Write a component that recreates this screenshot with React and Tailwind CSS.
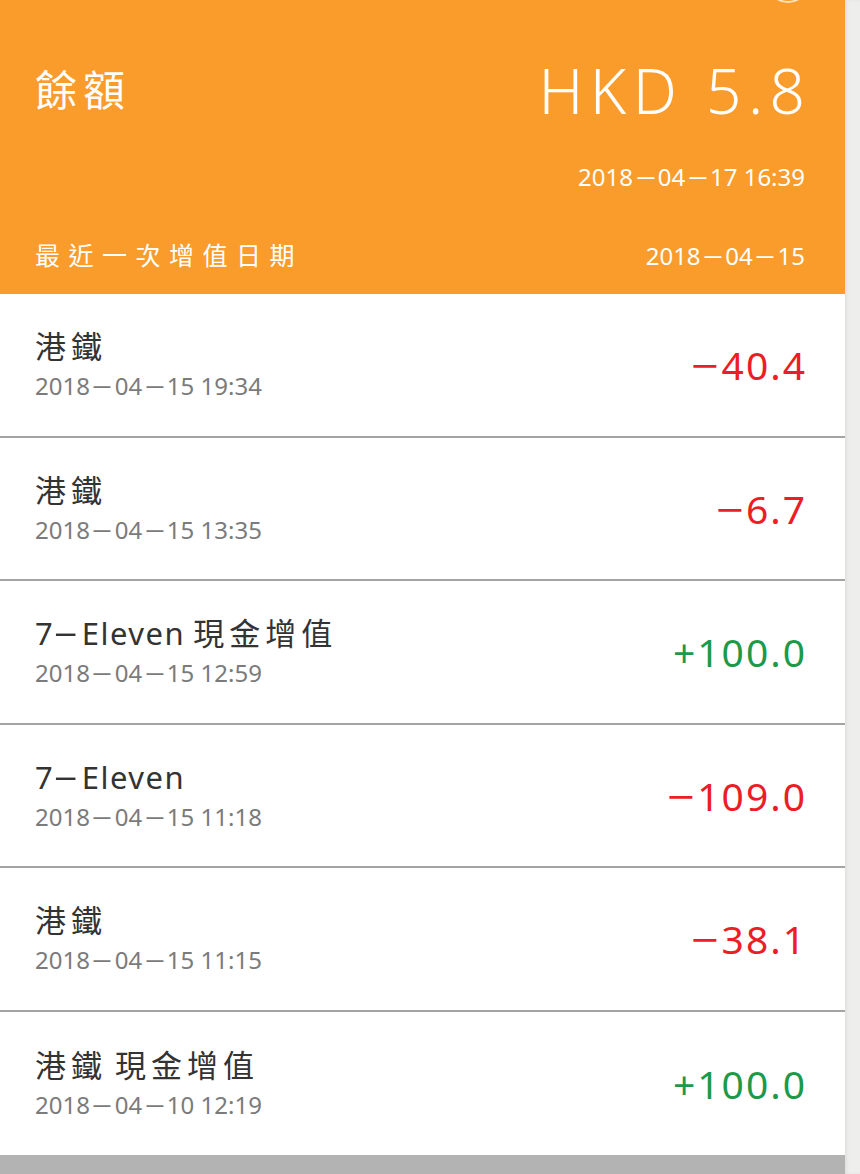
import React from "react";

const font = {
  fontFamily: '"Noto Sans", "Noto Sans CJK TC", sans-serif',
};

const records = [
  { title: "港鐵", time: "2018-04-15 19:34", amount: "-40.4", plus: false },
  { title: "港鐵", time: "2018-04-15 13:35", amount: "-6.7", plus: false },
  { title: "7-Eleven 現金增值", time: "2018-04-15 12:59", amount: "+100.0", plus: true },
  { title: "7-Eleven", time: "2018-04-15 11:18", amount: "-109.0", plus: false },
  { title: "港鐵", time: "2018-04-15 11:15", amount: "-38.1", plus: false },
  { title: "港鐵 現金增值", time: "2018-04-10 12:19", amount: "+100.0", plus: true },
];

// the app's font draws "-" as a long dash
function Dashed({ text, dash }) {
  const parts = text.split("-");
  return parts.map((part, i) => (
    <React.Fragment key={i}>
      {i > 0 && <span className={dash}>-</span>}
      {part}
    </React.Fragment>
  ));
}

const smallDash = "inline-block mx-[8.5px] scale-x-[2.9] -translate-y-[2px]";
const titleDash = "inline-block mx-[8px] scale-x-[2.6] -translate-y-[2px]";

function Title({ text }) {
  const words = text.split(" ");
  return words.map((word, i) => {
    const cjk = /[\u4e00-\u9fff]/.test(word);
    return (
      <React.Fragment key={i}>
        {i > 0 && " "}
        {cjk ? (
          <span className="tracking-[5px]">{word}</span>
        ) : (
          <span className="tracking-[1.5px]">
            <Dashed text={word} dash={titleDash} />
          </span>
        )}
      </React.Fragment>
    );
  });
}

function Amount({ value, plus }) {
  const sign = value[0];
  const rest = value.slice(1);
  return (
    <div
      className={
        plus
          ? "text-[39px] leading-none tracking-[2px] -mr-[2px] text-[#1c9a48] whitespace-nowrap"
          : "text-[39px] leading-none tracking-[2px] -mr-[2px] text-[#ec1d25] whitespace-nowrap"
      }
    >
      {sign === "-" ? (
        <span className="inline-block mx-[3px] scale-x-[1.25]">−</span>
      ) : (
        sign
      )}
      {rest}
    </div>
  );
}

function Row({ item, last }) {
  return (
    <div
      className={
        last
          ? "h-[143.5px] flex items-center justify-between pl-[35px] pr-[40px] bg-white"
          : "h-[143.5px] flex items-center justify-between pl-[35px] pr-[40px] bg-white border-b-2 border-[#a4a4a4]"
      }
    >
      <div className="flex flex-col">
        <div className="text-[31px] leading-[36px] text-[#333333] whitespace-nowrap">
          <Title text={item.title} />
        </div>
        <div className="text-[24px] leading-[30px] mt-[7px] text-[#7b7b7b] whitespace-nowrap">
          <Dashed text={item.time} dash={smallDash} />
        </div>
      </div>
      <Amount value={item.amount} plus={item.plus} />
    </div>
  );
}

export default function App() {
  return (
    <div className="w-[860px] h-[1174px] flex overflow-hidden bg-white" style={font}>
      <div className="w-[845px] flex flex-col">
        {/* header */}
        <div className="relative h-[294px] bg-[#f99c2c] text-white pl-[35px] pr-[40px] flex flex-col overflow-hidden">
          <div className="absolute left-[766px] top-[-41px] w-[44px] h-[44px] rounded-full border-2 border-[#fde2b8]" />

          <div className="flex items-center justify-between h-[62px] mt-[59px]">
            <div className="text-[42px] leading-none tracking-[6px]">餘額</div>
            <div className="text-[62px] leading-none font-light tracking-[6.5px] -mr-[6.5px]">HKD 5.8</div>
          </div>

          <div className="flex justify-end mt-[44px]">
            <div className="text-[24px] leading-none whitespace-nowrap">
              <Dashed text="2018-04-17 16:39" dash={smallDash} />
            </div>
          </div>

          <div className="flex items-center justify-between mt-[54px]">
            <div className="text-[25px] leading-none tracking-[8.5px]">最近一次增值日期</div>
            <div className="text-[24px] leading-none whitespace-nowrap">
              <Dashed text="2018-04-15" dash={smallDash} />
            </div>
          </div>
        </div>

        {/* records */}
        {records.map((item, index) => (
          <Row key={index} item={item} last={index === records.length - 1} />
        ))}

        <div className="flex-1 bg-[#b3b3b3]" />
      </div>

      <div className="flex-1 bg-[#eeeeed] shadow-[inset_2px_0_3px_rgba(0,0,0,0.06)]" />
    </div>
  );
}
